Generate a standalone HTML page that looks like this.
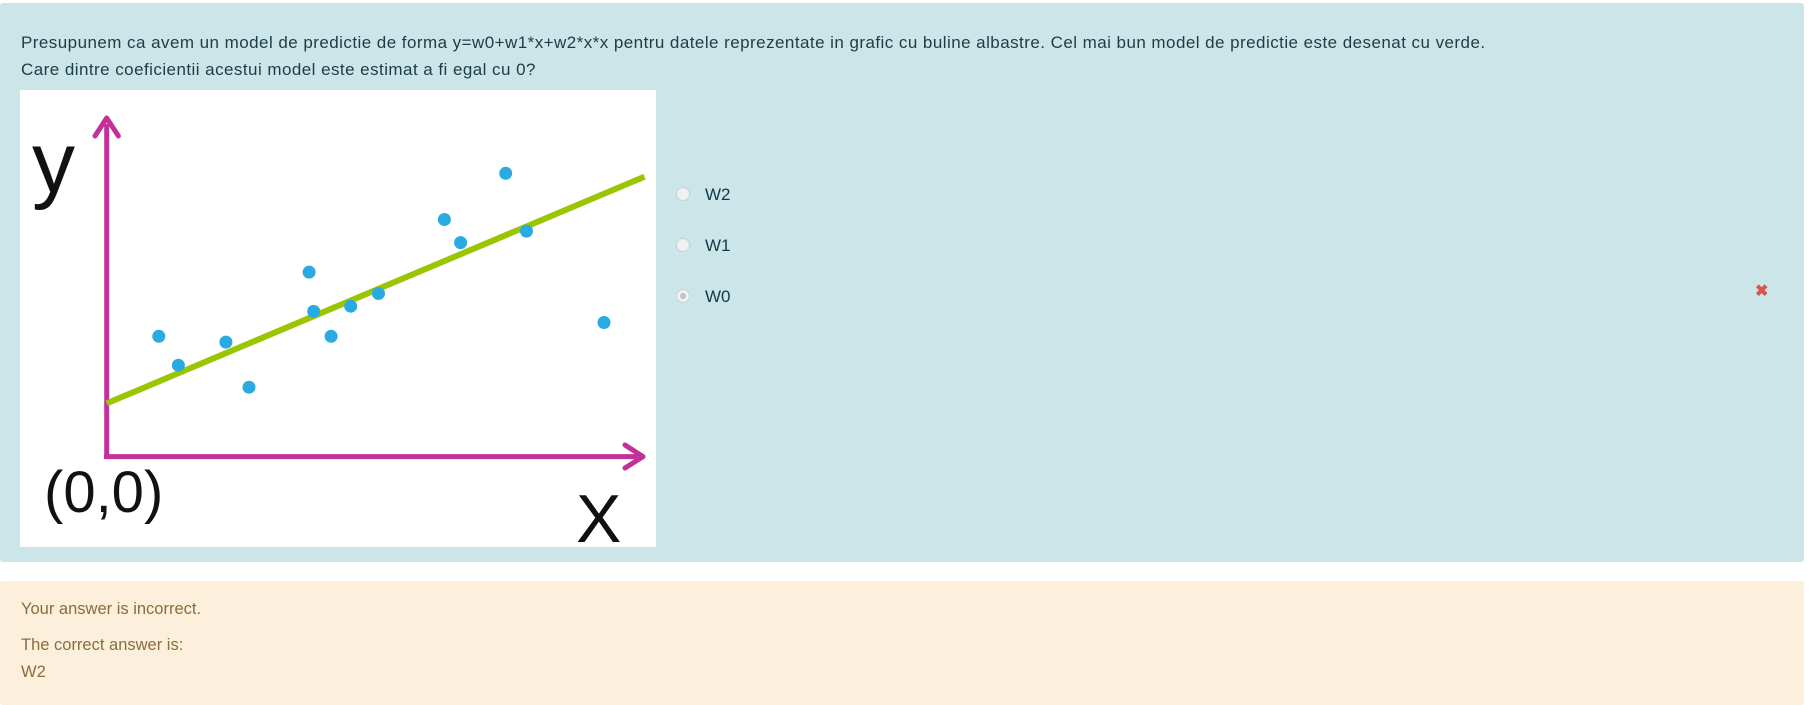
<!DOCTYPE html>
<html><head><meta charset="utf-8"><style>
body{margin:0;width:1810px;height:705px;background:#fff;font-family:"Liberation Sans",sans-serif;position:relative;overflow:hidden}
.q{position:absolute;left:0;top:3px;width:1804px;height:559px;background:#cce5e9;border-radius:3px}
.t{position:absolute;left:21px;font-size:17px;letter-spacing:0.45px;color:#1d3d44;white-space:nowrap}
.img{position:absolute;left:20px;top:90px;width:636px;height:457px;background:#fff}
.r{position:absolute;left:676px;width:12px;height:12px;border-radius:50%;border:1px solid #c8d0d2;background:#eef2f3}
.l{position:absolute;left:705px;font-size:17px;color:#10394a}
.fb{position:absolute;left:0;top:581px;width:1804px;height:124px;background:#fcefdc;border-radius:3px}
.f{position:absolute;left:21px;font-size:16.5px;color:#8a6d3b}
</style></head><body>
<div class="q"></div>
<div class="t" style="top:33px">Presupunem ca avem un model de predictie de forma y=w0+w1*x+w2*x*x pentru datele reprezentate in grafic cu buline albastre. Cel mai bun model de predictie este desenat cu verde.</div>
<div class="t" style="top:60px">Care dintre coeficientii acestui model este estimat a fi egal cu 0?</div>
<div class="img"><svg width="636" height="457" viewBox="0 0 636 457">
<line x1="86.7" y1="34" x2="86.7" y2="366.6" stroke="#c2309a" stroke-width="5"/>
<polyline points="75,46 86.7,28 98.4,46" fill="none" stroke="#c2309a" stroke-width="5" stroke-linecap="round" stroke-linejoin="round"/>
<line x1="84" y1="366.6" x2="618" y2="366.6" stroke="#c2309a" stroke-width="5"/>
<polyline points="605,355 623,366.6 605,378" fill="none" stroke="#c2309a" stroke-width="5" stroke-linecap="round" stroke-linejoin="round"/>
<line x1="86.7" y1="313.4" x2="624.5" y2="86.7" stroke="#99c600" stroke-width="6"/>
<g fill="#29abe2">
<circle cx="138.8" cy="246.3" r="6.5"/><circle cx="158.4" cy="275.2" r="6.5"/><circle cx="205.9" cy="252.1" r="6.5"/><circle cx="229" cy="297.2" r="6.5"/><circle cx="289.1" cy="182.1" r="6.5"/><circle cx="293.7" cy="221.4" r="6.5"/><circle cx="311.1" cy="246.3" r="6.5"/><circle cx="330.7" cy="216.2" r="6.5"/><circle cx="358.5" cy="203.5" r="6.5"/><circle cx="424.4" cy="129.5" r="6.5"/><circle cx="440.6" cy="152.6" r="6.5"/><circle cx="485.7" cy="83.3" r="6.5"/><circle cx="506.5" cy="141.1" r="6.5"/><circle cx="584" cy="232.5" r="6.5"/>
</g>
<text x="12" y="102" font-family="Liberation Sans,sans-serif" font-size="86" fill="#111">y</text>
<text x="24" y="422" font-family="Liberation Sans,sans-serif" font-size="58" fill="#111">(0,0)</text>
<text x="556" y="452" font-family="Liberation Sans,sans-serif" font-size="68" fill="#111">X</text>
</svg></div>
<div class="r" style="top:187px"></div>
<div class="r" style="top:238px"></div>
<div class="r" style="top:289px"><div style="position:absolute;left:3px;top:3px;width:6px;height:6px;border-radius:50%;background:#bcc4c6"></div></div>
<div class="l" style="top:185px">W2</div>
<div class="l" style="top:236px">W1</div>
<div class="l" style="top:287px">W0</div>
<div style="position:absolute;left:1755px;top:281px;font-size:16px;color:#d9534f;font-weight:bold">✖</div>
<div class="fb"></div>
<div class="f" style="top:600px">Your answer is incorrect.</div>
<div class="f" style="top:636px">The correct answer is:</div>
<div class="f" style="top:663px">W2</div>
</body></html>
